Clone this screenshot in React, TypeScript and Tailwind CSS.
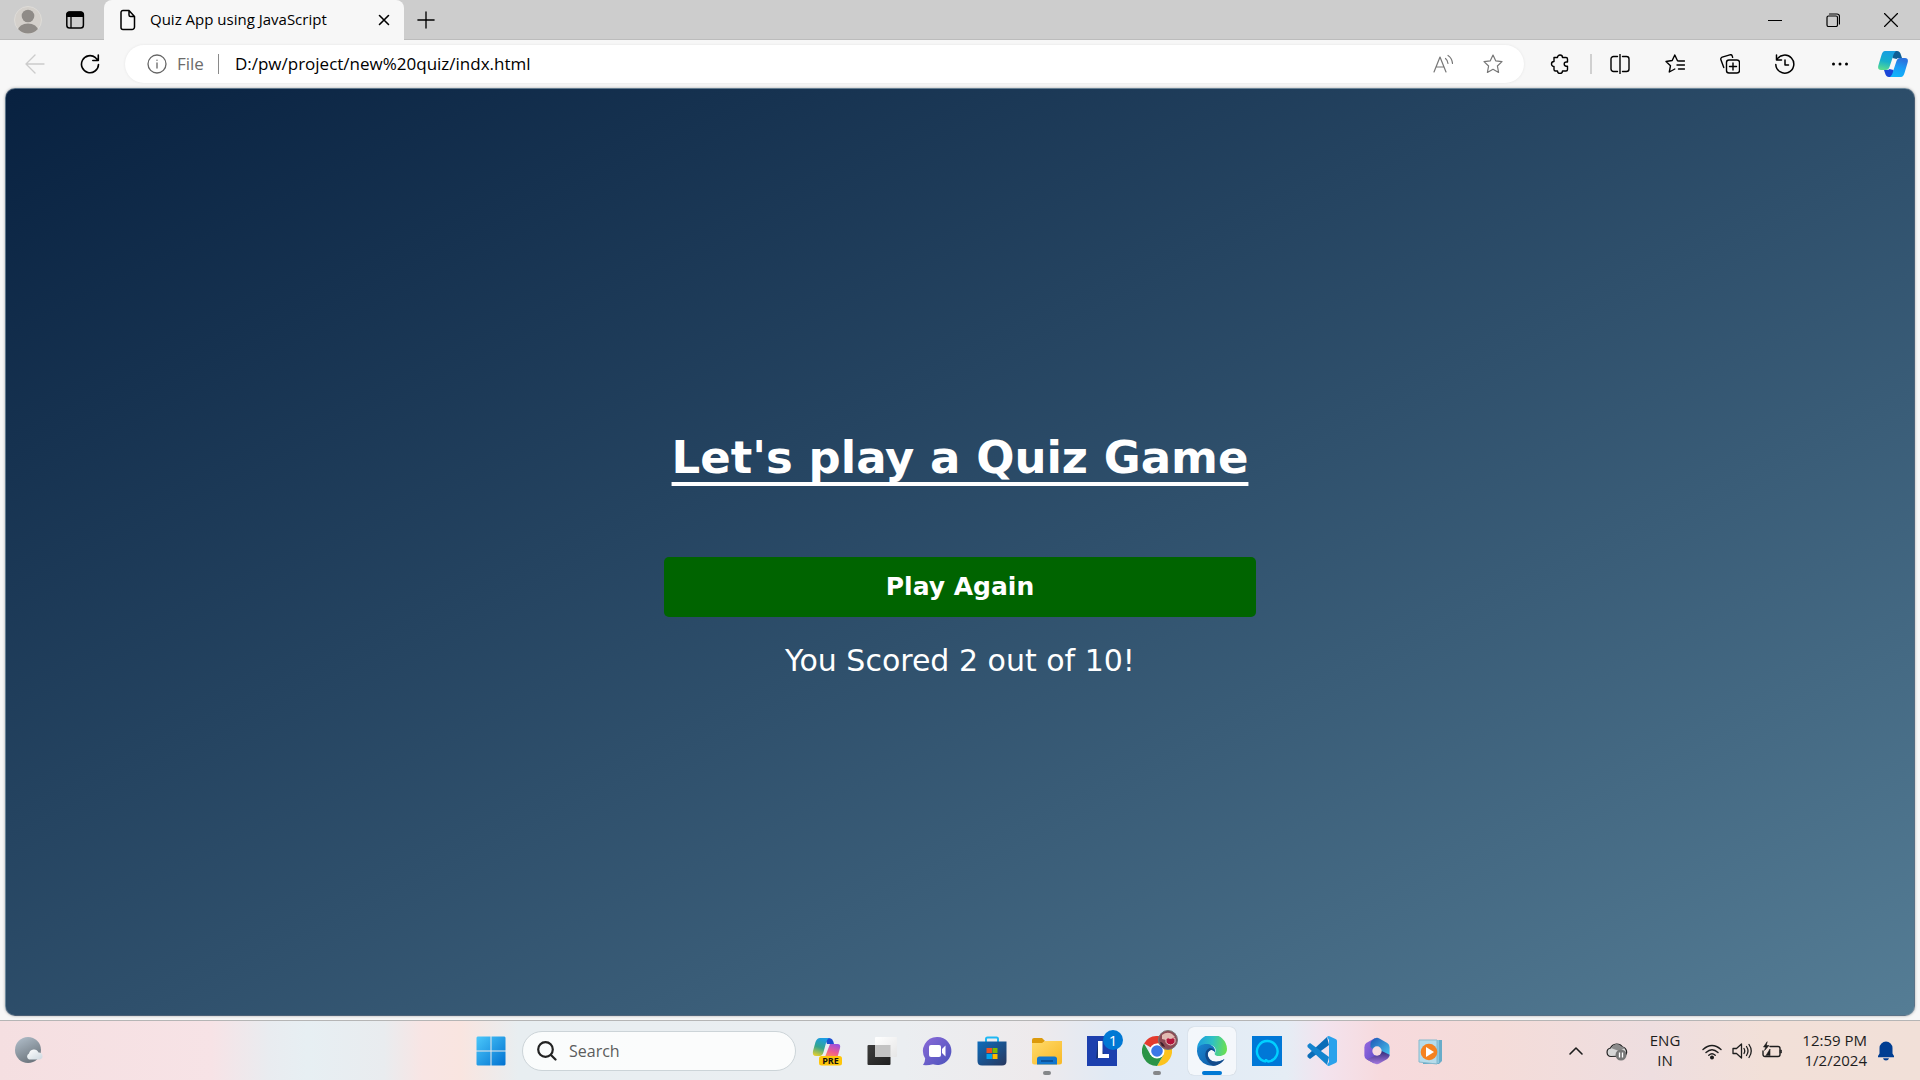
import type { ReactNode, SVGProps } from "react";

type IconProps = SVGProps<SVGSVGElement> & { children?: ReactNode };

function Line({ children, ...props }: IconProps) {
  return (
    <svg
      viewBox="0 0 20 20"
      fill="none"
      stroke="currentColor"
      strokeWidth="1.2"
      strokeLinecap="round"
      strokeLinejoin="round"
      className="size-5"
      aria-hidden="true"
      {...props}
    >
      {children}
    </svg>
  );
}

const STAR = "M10 1 12.7 6.8 19 7.6 14.4 12 15.6 18.4 10 15.3 4.4 18.4 5.6 12 1 7.6 7.3 6.8z";

function IconButton({ label, className, children }: { label: string; className: string; children: ReactNode }) {
  return (
    <button type="button" aria-label={label} className={`flex shrink-0 items-center justify-center ${className}`}>
      {children}
    </button>
  );
}

function TabBar() {
  return (
    <header className="flex h-10 items-stretch border-b border-[#bcbcbc] bg-[#cdcdcd]">
      <IconButton label="Profile" className="w-14">
        <svg viewBox="0 0 28 28" className="size-7" aria-hidden="true">
          <clipPath id="avatar">
            <circle cx="14" cy="14" r="13.5" />
          </clipPath>
          <circle cx="14" cy="14" r="13.5" fill="#d4d0cb" stroke="#dedcd8" />
          <g clipPath="url(#avatar)" fill="#8f8b87">
            <circle cx="14" cy="10" r="6.3" />
            <ellipse cx="14" cy="24.5" rx="10" ry="7" />
          </g>
        </svg>
      </IconButton>
      <IconButton label="Tab actions" className="w-[38px]">
        <svg viewBox="0 0 20 20" className="size-5" aria-hidden="true">
          <rect x="1.8" y="2" width="16.6" height="16" rx="2.8" fill="none" stroke="#000" strokeWidth="1.5" />
          <path d="M1.5 7V4.400A3 3 0 0 1 4.500 1.400h11a3 3 0 0 1 3 3V7z" />
          <path d="M6 7v11" stroke="#000" strokeWidth="1.3" />
        </svg>
      </IconButton>
      <div className="-mb-px ml-2.5 flex w-[300px] items-center rounded-t-lg bg-[#f7f7f7] pr-2 pl-4">
        <Line className="h-6 w-4" viewBox="0 0 16 24" strokeWidth="1.5">
          <path d="M3 2.500h6l5.500 6V19a2.500 2.500 0 0 1-2.500 2.500H3A2 2 0 0 1 1 19.500V4.500a2 2 0 0 1 2-2zM9 2.700V7a1.500 1.500 0 0 0 1.500 1.500h4" />
        </Line>
        <span className="ml-3.5 flex-1 truncate pb-0.5 text-[15px] leading-5 text-black">Quiz App using JavaScript</span>
        <IconButton label="Close tab" className="size-6">
          <Line className="size-3" viewBox="0 0 12 12" strokeWidth="1.6">
            <path d="m1.500 1.500 9 9m0-9-9 9" />
          </Line>
        </IconButton>
      </div>
      <IconButton label="New tab" className="w-11">
        <Line strokeWidth="1.5" className="size-[18px]">
          <path d="M10 1v18M1 10h18" />
        </Line>
      </IconButton>
      <div className="flex-1" />
      <IconButton label="Minimize" className="w-[58px]">
        <Line className="size-[14px]" viewBox="0 0 14 14">
          <path d="M.5 7.500h13" />
        </Line>
      </IconButton>
      <IconButton label="Restore" className="w-[58px]">
        <Line className="size-[14px]" viewBox="0 0 14 14">
          <rect x="1" y="3" width="10.500" height="10.500" rx="1.500" />
          <path d="M3.500 1H11a2.500 2.500 0 0 1 2.500 2.500V11" />
        </Line>
      </IconButton>
      <IconButton label="Close" className="w-[58px]">
        <Line className="size-[14px]" viewBox="0 0 14 14">
          <path d="m.5.5 13 13m0-13-13 13" />
        </Line>
      </IconButton>
    </header>
  );
}

function Copilot() {
  return (
    <svg viewBox="0 0 30 28" className="h-7 w-[30px]" aria-hidden="true">
      <defs>
        <linearGradient id="cpA" x1="0.3" y1="0" x2="0.1" y2="1">
          <stop offset="0" stopColor="#189fe0" />
          <stop offset="0.5" stopColor="#17b0cc" />
          <stop offset="1" stopColor="#5fe08a" />
        </linearGradient>
        <linearGradient id="cpB" x1="0" y1="1" x2="0.3" y2="0">
          <stop offset="0" stopColor="#12b9fb" />
          <stop offset="0.6" stopColor="#199bf5" />
          <stop offset="1" stopColor="#2a74de" />
        </linearGradient>
      </defs>
      <path d="M13 1h6q3 0 4 4l1 3h-3q-2 0-2.500 1l-4-1z" fill="#0f5f95" />
      <path d="M17 27h-6q-3 0-4-4l-1-3h3q2 0 2.500-1l4 1z" fill="#1a46d8" />
      <path d="M7 1h11q-2.500 2-3.500 7l-3 9q-1 3-3.500 3H3q-4 0-2.500-5l3-10Q4.700 1 7 1z" fill="url(#cpA)" />
      <path d="M23 27H12q2.500-2 3.500-7l3-9q1-3 3.500-3h5q4 0 2.500 5l-3 10q-1.200 4-3.500 4z" fill="url(#cpB)" />
    </svg>
  );
}

function Toolbar() {
  return (
    <nav aria-label="Browser toolbar" className="flex h-12 items-center bg-[#f7f7f7] text-black">
      <IconButton label="Back" className="ml-2 w-[54px] text-[#cccccc]">
        <Line strokeWidth="1.4">
          <path d="M19 10H1m9-9-9 9 9 9" />
        </Line>
      </IconButton>
      <IconButton label="Refresh" className="w-14">
        <Line strokeWidth="1.6">
          <path d="M18.500 10.500a8.500 8.500 0 1 1-3-6.800l2.500 2.500M18.300 1v5.500h-5.500" />
        </Line>
      </IconButton>
      <div className="ml-[7px] flex h-[38px] min-w-0 flex-1 items-center rounded-full bg-white pr-[21px] pl-[22px] shadow-[0_0_3px_rgba(0,0,0,0.08)]">
        <Line strokeWidth="1.3" className="size-5 shrink-0 text-[#666]">
          <circle cx="10" cy="10" r="9" />
          <path d="M10 9v5M10 6.100v.2" />
        </Line>
        <label htmlFor="address" className="ml-2.5 text-[17px] leading-6 text-[#6b6b6b]">
          File
        </label>
        <span className="ml-3.5 h-5 w-px bg-[#8a8a8a]" />
        <input
          id="address"
          defaultValue="D:/pw/project/new%20quiz/indx.html"
          className="ml-4 h-6 min-w-0 flex-1 bg-transparent text-[17px] leading-6 text-black outline-none"
        />
        <IconButton label="Read aloud" className="mr-[30px] text-[#777]">
          <Line>
            <path d="M1 18 7 3l6 15M3.200 13h7.600M12.500 4.500q2 1.500 2.500 5M15 1.500q4 2.500 4.500 8" />
          </Line>
        </IconButton>
        <IconButton label="Add to favorites" className="text-[#777]">
          <Line>
            <path d={STAR} />
          </Line>
        </IconButton>
      </div>
      <IconButton label="Extensions" className="ml-[26px]">
        <Line strokeWidth="1.4">
          <path d="M4 3.500h3.500a2.500 2.500 0 0 1 5 0H16a1.500 1.500 0 0 1 1.500 1.500v3h-1.200a2 2 0 0 0 0 4.200h1.200v3.300A1.500 1.500 0 0 1 16 17h-3.500a2.500 2.500 0 0 1-5 0H5.500A1.500 1.500 0 0 1 4 15.500v-3a2.500 2.500 0 0 1 0-5z" />
        </Line>
      </IconButton>
      <span className="ml-5 h-5 w-0.5 bg-[#d0d0d0]" />
      <IconButton label="Split screen" className="ml-[18px]">
        <Line strokeWidth="1.4">
          <path d="M7.500 2.500h-4A2.500 2.500 0 0 0 1 5v10a2.500 2.500 0 0 0 2.500 2.500h4M10 .5v19M12.500 2.500h4A2.500 2.500 0 0 1 19 5v10a2.500 2.500 0 0 1-2.500 2.500h-4" />
        </Line>
      </IconButton>
      <IconButton label="Favorites" className="ml-[35px]">
        <Line strokeWidth="1.4">
          <path d="M14 7 12.500 6.800 9.800 1 7.200 6.500 1 7.500l4.500 4.200L4.300 18l5.500-3M13 7h6.500M12 11h7.500M13.500 15h6" />
        </Line>
      </IconButton>
      <IconButton label="Collections" className="ml-[35px]">
        <Line strokeWidth="1.4">
          <rect x="6.500" y="6" width="13" height="13" rx="2.500" />
          <path d="M13 9v7M9.500 12.500h7M3.800 13.500.9 5.800a2 2 0 0 1 1.300-2.600L9.800.8a2 2 0 0 1 2.500 1.300l.3 1.200" />
        </Line>
      </IconButton>
      <IconButton label="History" className="ml-[35px]">
        <Line strokeWidth="1.5">
          <path d="M1.500 1v5h5M1.800 6a9 9 0 1 1-1 4.500M10 6v5h3.500" />
        </Line>
      </IconButton>
      <IconButton label="Settings and more" className="ml-[35px]">
        <svg viewBox="0 0 20 20" className="size-5" aria-hidden="true">
          <circle cx="3.500" cy="10" r="1.500" />
          <circle cx="10" cy="10" r="1.500" />
          <circle cx="16.500" cy="10" r="1.500" />
        </svg>
      </IconButton>
      <IconButton label="Copilot" className="mr-3 ml-7">
        <Copilot />
      </IconButton>
    </nav>
  );
}

function QuizPage() {
  return (
    <main className="flex min-h-0 flex-1 flex-col items-center justify-center rounded-[10px] border border-[#8a9aa8]/50 bg-linear-to-br from-[#082140] to-[#557d95] text-white shadow-[0_0_3px_rgba(0,0,0,0.3)]">
      <section className="mt-1.5 flex w-[592px] flex-col items-center font-['Verdana','DejaVu_Sans',sans-serif]">
        <h1 className="text-[45px] leading-[56px] font-bold whitespace-nowrap underline decoration-4 underline-offset-[9px] [text-decoration-skip-ink:none]">
          Let's play a Quiz Game
        </h1>
        <button type="button" className="mt-[71px] h-[60px] w-full rounded-[5px] bg-[#006400] text-[25px] font-bold">
          Play Again
        </button>
        <p className="mt-6 text-[30px] leading-10">You Scored 2 out of 10!</p>
      </section>
    </main>
  );
}

function TaskButton({ label, state, children }: { label: string; state?: "open" | "active"; children: ReactNode }) {
  return (
    <button
      type="button"
      aria-label={label}
      className={`relative flex h-12 w-12 shrink-0 items-center justify-center rounded-md ${
        state === "active" ? "bg-white/60 shadow-[0_0_1px_rgba(0,0,0,0.3)]" : ""
      }`}
    >
      {children}
      {state === "open" && <span className="absolute bottom-0 h-1 w-2 rounded-full bg-[#858789]" />}
      {state === "active" && <span className="absolute bottom-0 h-1 w-5 rounded-full bg-[#0078d4]" />}
    </button>
  );
}

function Art({ children, className = "size-[30px]", viewBox = "0 0 30 30" }: { children: ReactNode; className?: string; viewBox?: string }) {
  return (
    <svg viewBox={viewBox} className={className} aria-hidden="true">
      {children}
    </svg>
  );
}

function Gradient({ id, from, to, x2 = "1", y2 = "1" }: { id: string; from: string; to: string; x2?: string; y2?: string }) {
  return (
    <linearGradient id={id} x1="0" y1="0" x2={x2} y2={y2}>
      <stop offset="0" stopColor={from} />
      <stop offset="1" stopColor={to} />
    </linearGradient>
  );
}

function Apps() {
  return (
    <div className="flex items-center gap-[7px] pl-7">
      <TaskButton label="Start">
        <Art>
          <linearGradient id="win" x1="0" y1="0" x2="30" y2="30" gradientUnits="userSpaceOnUse">
            <stop offset="0" stopColor="#4cc9fb" />
            <stop offset="1" stopColor="#0070d0" />
          </linearGradient>
          <path fill="url(#win)" d="M1.500.5h13v14H.5v-13zM15.500.5h13l1 1v13h-14zM.5 15.500h14v14h-13l-1-1zM15.500 15.500h14v13l-1 1h-13z" />
        </Art>
      </TaskButton>
      <label className="flex h-10 w-[274px] items-center rounded-full border border-[#ccd4d8] bg-white/80 pl-3.5">
        <Line className="size-5 text-[#222]" strokeWidth="2.2">
          <circle cx="8.500" cy="8.500" r="7.300" />
          <path d="m14 14 4.500 4.500" />
        </Line>
        <input
          type="search"
          aria-label="Search"
          placeholder="Search"
          className="ml-3 min-w-0 flex-1 bg-transparent text-[16px] outline-none placeholder:text-[#5c5c5c]"
        />
      </label>
      <TaskButton label="Copilot preview">
        <Art>
          <defs>
            <linearGradient id="preA" x1="0.5" y1="0" x2="0.2" y2="1">
              <stop offset="0" stopColor="#1b9de2" />
              <stop offset="0.5" stopColor="#35a58c" />
              <stop offset="1" stopColor="#e8cf2c" />
            </linearGradient>
            <linearGradient id="preB" x1="0.7" y1="0" x2="0.3" y2="1">
              <stop offset="0" stopColor="#9b52e0" />
              <stop offset="0.6" stopColor="#ef5a8f" />
              <stop offset="1" stopColor="#ff8a5c" />
            </linearGradient>
          </defs>
          <path d="M13 2h4q4 0 5 6h-7z" fill="#1c4ed1" />
          <path d="M8 2h9q-2 1-3 5l-2.500 9q-1 4-4 4H4q-4 0-3-5L3.500 6Q5 2 8 2z" fill="url(#preA)" />
          <path d="M18 8h7.500q3.500 0 2.500 4l-2.500 9H13z" fill="url(#preB)" />
          <rect x="7" y="20" width="23" height="9.500" rx="2.500" fill="#ffc60a" />
          <text x="18.500" y="28" textAnchor="middle" fontSize="9" fontWeight="700" fontFamily="Open Sans" fill="#111">
            PRE
          </text>
        </Art>
      </TaskButton>
      <TaskButton label="Task view">
        <Art>
          <Gradient id="tvA" from="#3c3c3c" to="#202020" />
          <Gradient id="tvB" from="#ffffff" to="#e6e6e6" />
          <rect y="9" x=".5" width="23" height="20" rx="1" fill="url(#tvA)" />
          <rect x="8" y="1" width="22" height="20" rx="1" fill="url(#tvB)" />
          <rect x="8" y="9" width="15.500" height="12" fill="#c3c3c3" />
        </Art>
      </TaskButton>
      <TaskButton label="Chat">
        <Art>
          <Gradient id="chat" from="#8a6ad8" to="#4b53bc" />
          <path d="M15.500 1a14 14 0 1 1-4.500 27.300Q6 29.500 1 29q2-2.500 2.200-6.500A14 14 0 0 1 15.500 1z" fill="url(#chat)" />
          <rect x="7" y="9" width="12" height="12" rx="2" fill="#fff" />
          <path d="m20 13 3.500-3.500V20.500L20 17z" fill="#fff" />
        </Art>
      </TaskButton>
      <TaskButton label="Microsoft Store">
        <Art>
          <Gradient id="store" from="#0d6cbb" to="#28375e" />
          <path d="M9 7V3q0-1.500 1.500-1.500h9Q21 1.500 21 3v4" fill="none" stroke="#20b8f3" strokeWidth="2" />
          <path d="M.5 5.500h29V25q0 4.500-4.500 4.500H5Q.5 29.500.5 25z" fill="url(#store)" />
          <path d="M9.500 12H15v5H9.500z" fill="#f25022" />
          <path d="M15.500 12h5v5h-5z" fill="#7fba00" />
          <path d="M9.500 18H15v5H9.500z" fill="#00a4ef" />
          <path d="M15.500 18h5v5h-5z" fill="#ffb900" />
        </Art>
      </TaskButton>
      <TaskButton label="File Explorer" state="open">
        <Art>
          <Gradient id="folder" from="#ffdb6c" to="#f8b825" />
          <path d="M0 4q0-2 2-2h8l3 3-3 3H0z" fill="#dc9a0c" />
          <path d="M0 7h10l3-2h17v21q0 2.500-2.500 2.500h-25Q0 28.500 0 26z" fill="url(#folder)" />
          <path d="M5 28.500V23q0-2.500 2.500-2.500h15Q25 20.500 25 23v5.500z" fill="#1276cd" />
          <path d="M9 25h12" stroke="#0a4a8c" strokeWidth="1.5" />
        </Art>
      </TaskButton>
      <TaskButton label="Lens, 1 notification">
        <Art>
          <path d="M0 0h30v30H0z" fill="#1c40ae" />
          <path d="m11 5-2 18 8-5z" fill="#15306f" />
          <path d="M11 5h4.500v13H22v4H11z" fill="#fff" />
        </Art>
        <span className="absolute top-[3px] right-[3px] flex size-5 items-center justify-center rounded-full bg-[#0078d4] text-[15px] leading-5 text-white">
          1
        </span>
      </TaskButton>
      <TaskButton label="Chrome" state="open">
        <Art>
          <path d="M15 15 2 7.500A15 15 0 0 1 28 7.500H15z" fill="#e33b2e" />
          <path d="M28 7.500A15 15 0 0 1 15 30l6.500-11.200L15 7.500z" fill="#fcc31e" />
          <path d="M15 30A15 15 0 0 1 2 7.500L8.500 18.800 15 22l6.500-3.200z" fill="#2a9447" />
          <circle cx="15" cy="15" r="7.500" fill="#fff" />
          <circle cx="15" cy="15" r="5.800" fill="#3b78e7" />
        </Art>
        <span className="absolute top-[3px] right-[3px]">
          <Art className="size-5" viewBox="0 0 20 20">
            <circle cx="10" cy="10" r="9.500" fill="#8b4a54" stroke="#777" />
            <path d="M4 5q5-4 10-1l3 3-9 3-4-1z" fill="#e1bbb2" />
            <path d="M8 8.500q2-1.500 4.500 0 2.500-1.500 4.500 0v4q-4.500 5-9 0z" fill="#b4153b" stroke="#e5c9c0" />
            <path d="M2 12q3 0 5 5l-3-1z" fill="#3a1f2b" />
          </Art>
        </span>
      </TaskButton>
      <TaskButton label="Microsoft Edge" state="active">
        <Art>
          <defs>
            <linearGradient id="edA" x1="0" y1="0.4" x2="1" y2="0.5">
              <stop offset="0" stopColor="#1c9de0" />
              <stop offset="0.5" stopColor="#2fc1c4" />
              <stop offset="1" stopColor="#6be04f" />
            </linearGradient>
            <Gradient id="edB" from="#1b87d2" to="#0c55a0" y2="0.8" />
          </defs>
          <path d="M0 14A15 15 0 0 1 30 13c0 5-4 7-7.500 7-4 0-5.500-1.500-4.500-3 2-3 0-8-6-8S1 11 0 14z" fill="url(#edA)" />
          <path d="M0 14c1-4.500 6-6.500 10.500-6 5.500.6 8.500 5 7.500 8.500-1-2-3-3-5-2-3 1.500-3 6 0 9s9 3 14.500-.5A15 15 0 0 1 0 14z" fill="url(#edB)" />
          <path d="M12.500 12C6 15 7 25 16 29.800 21 29.500 25 27 27.500 23c-5.500 3.500-11.500 3.500-14.500.5s-3-7.500 0-9c2-1 4 0 5 2-.5-3-2.500-5-5.500-4.500z" fill="#114a8b" />
        </Art>
      </TaskButton>
      <TaskButton label="Alexa">
        <Art>
          <path d="M0 0h30v30H0z" fill="#0078d7" />
          <path d="M14 25.500a10.300 10.300 0 1 1 2.500 0q-2.500-.3-2.500-2.500" fill="none" stroke="#00d0ff" strokeWidth="2.4" />
        </Art>
      </TaskButton>
      <TaskButton label="Visual Studio Code">
        <Art>
          <path d="m22 9-19 14-2.500-2V19L20 1z" fill="#0b6db8" />
          <path d="M22 21 3 7 .5 9v2L20 29z" fill="#1484cf" />
          <path d="M20 1q1-1.200 2.500-.8l6 2.800q1.500.7 1.500 2v20q0 1.300-1.500 2l-6 2.800Q21 30.200 20 29l2-3V4z" fill="#2aa2ec" />
        </Art>
      </TaskButton>
      <TaskButton label="Microsoft 365">
        <Art className="size-7">
          <Gradient id="mA" from="#9a6be0" to="#5a4ac8" />
          <Gradient id="mB" from="#1e55b5" to="#49c8f0" />
          <Gradient id="mC" from="#312a78" to="#a67ae0" x2="0" />
          <mask id="ring">
            <path d="M0 0h30v30H0z" fill="#fff" />
            <circle cx="15" cy="15" r="5" fill="#000" />
          </mask>
          <g mask="url(#ring)">
            <path d="M13 1 3.500 6.500Q1.500 8 1.500 11v9q0 2.500 2.500 4l8 4.500L15 15z" fill="url(#mA)" />
            <path d="M12.500 1.500Q15 0 17.500 1.500L26 6.500q2.500 1.500 2.500 4.500v9.500L15 15 8 11V7q0-3 4.500-5.500z" fill="url(#mB)" />
            <path d="m20 15 8.500 4q0 3-2.500 4.500L17.500 28.500Q15 30 12.500 28.500L4 24l9-4z" fill="url(#mC)" />
          </g>
        </Art>
      </TaskButton>
      <TaskButton label="Media Player">
        <Art className="size-[30px]">
          <path d="M6 4h19v21l-3 3H6z" fill="#69acc9" />
          <path d="M6 4h16v23H6z" fill="#8cc7de" />
          <path d="M2 4h18v24l-18-2z" fill="#b6dceb" stroke="#86b9cd" />
          <circle cx="12" cy="16" r="8.300" fill="#f58220" />
          <path d="M9 11v10l8-5z" fill="#fff" />
        </Art>
      </TaskButton>
    </div>
  );
}

function Tray() {
  return (
    <div className="flex flex-1 items-center justify-end pr-[25px] text-[#1d1d1d]">
      <IconButton label="Show hidden icons" className="mr-[22px]">
        <Line className="size-4" viewBox="0 0 16 16" strokeWidth="1.6">
          <path d="m2 11 6-6 6 6" />
        </Line>
      </IconButton>
      <IconButton label="OneDrive" className="mr-[22px]">
        <svg viewBox="0 0 22 20" className="h-5 w-[22px]" aria-hidden="true">
          <path d="M5 15.500a4.300 4.300 0 0 1-.5-8.500A7 7 0 0 1 16.500 6a5 5 0 0 1 2 9z" fill="#d6d6d6" stroke="#222" strokeWidth="1.2" />
          <path d="M5 7Q10 0 15.500 5.500L19 7l-6 3z" fill="#8b8b8b" />
          <circle cx="15" cy="14" r="5.500" fill="#777" />
          <path d="M13.500 11.500v5m3-5v5" stroke="#fff" strokeWidth="1.3" />
        </svg>
      </IconButton>
      <button type="button" className="mr-[22px] pb-0.5 text-center text-[15px] leading-5">
        ENG
        <br />
        IN
      </button>
      <button type="button" aria-label="Network, volume and battery" className="mr-5 flex items-center gap-2.5">
        <Line strokeWidth="1.4">
          <path d="M1 8.500q9-8 18 0M4 11.500q6-5.500 12 0M6.800 14.200q3.200-2.800 6.400 0" />
          <circle cx="10" cy="16.500" r="1.300" fill="currentColor" />
        </Line>
        <Line strokeWidth="1.3">
          <path d="M1 7.500h3.500L9.500 3v14l-5-4.500H1zM12 7.500q1.500 2.500 0 5M14.500 5.500q3 4.500 0 9M17 3.500q4.500 6.500 0 13" />
        </Line>
        <Line strokeWidth="1.4">
          <path d="M8 5.500h8a2 2 0 0 1 2 2v6a2 2 0 0 1-2 2H3a2 2 0 0 1-2-2V10" />
          <path d="M18.500 9h1v3h-1zM5 1 1.500 6h2.300L2.500 9.500 7 4.500H4.500zM4 14.500 8 8v6.500z" fill="currentColor" strokeWidth=".6" />
        </Line>
      </button>
      <button type="button" className="mr-2.5 pb-0.5 text-right text-[15px] leading-5 whitespace-nowrap">
        12:59 PM
        <br />
        1/2/2024
      </button>
      <IconButton label="Notifications" className="">
        <svg viewBox="0 0 18 20" className="h-5 w-[18px]" fill="#003e92" aria-hidden="true">
          <path d="M9 .5a6.500 6.500 0 0 1 6.500 6.500v5.500L17 15v1.300H1V15l1.500-2.500V7A6.500 6.500 0 0 1 9 .5zM6 17.200h6q-.5 2.300-3 2.300t-3-2.300z" />
        </svg>
      </IconButton>
    </div>
  );
}

function Taskbar() {
  return (
    <footer className="flex h-[60px] items-center border-t border-[#b5b5b5] bg-[linear-gradient(90deg,#f5dfe1_0%,#f7e3e6_11%,#e9ecf0_14%,#e7eff3_16%,#e9ecef_20%,#f8e5e4_22%,#f9e5e0_24%,#e8eef1_27%,#ebeef1_47%,#eeeaec_54%,#e0eaf5_58%,#e5edf5_67%,#f3e3ee_69%,#f7dadd_72%,#f4dcd9_78%,#eedee0_86%,#f2e0d8_92%,#f1e0d8_100%)]">
      <div className="flex flex-1 items-center">
        <IconButton label="Weather" className="ml-[14px]">
          <svg viewBox="0 0 30 28" className="h-7 w-[30px]" aria-hidden="true">
            <Gradient id="moon" from="#b4c1cd" to="#6f7880" x2="0.5" />
            <Gradient id="cloud" from="#ffffff" to="#cdd8e0" />
            <circle cx="14" cy="13" r="13" fill="url(#moon)" />
            <path d="M15 22.500a3.300 3.300 0 0 1 0-6 5 5 0 0 1 9.500-1A3.600 3.600 0 0 1 26 22.500z" fill="url(#cloud)" />
          </svg>
        </IconButton>
      </div>
      <Apps />
      <Tray />
    </footer>
  );
}

export default function App() {
  return (
    <div className="flex h-screen flex-col overflow-hidden bg-[#f7f7f7] font-['Open_Sans',sans-serif]">
      <TabBar />
      <Toolbar />
      <div className="flex min-h-0 flex-1 px-[5px] pb-1">
        <QuizPage />
      </div>
      <Taskbar />
    </div>
  );
}
